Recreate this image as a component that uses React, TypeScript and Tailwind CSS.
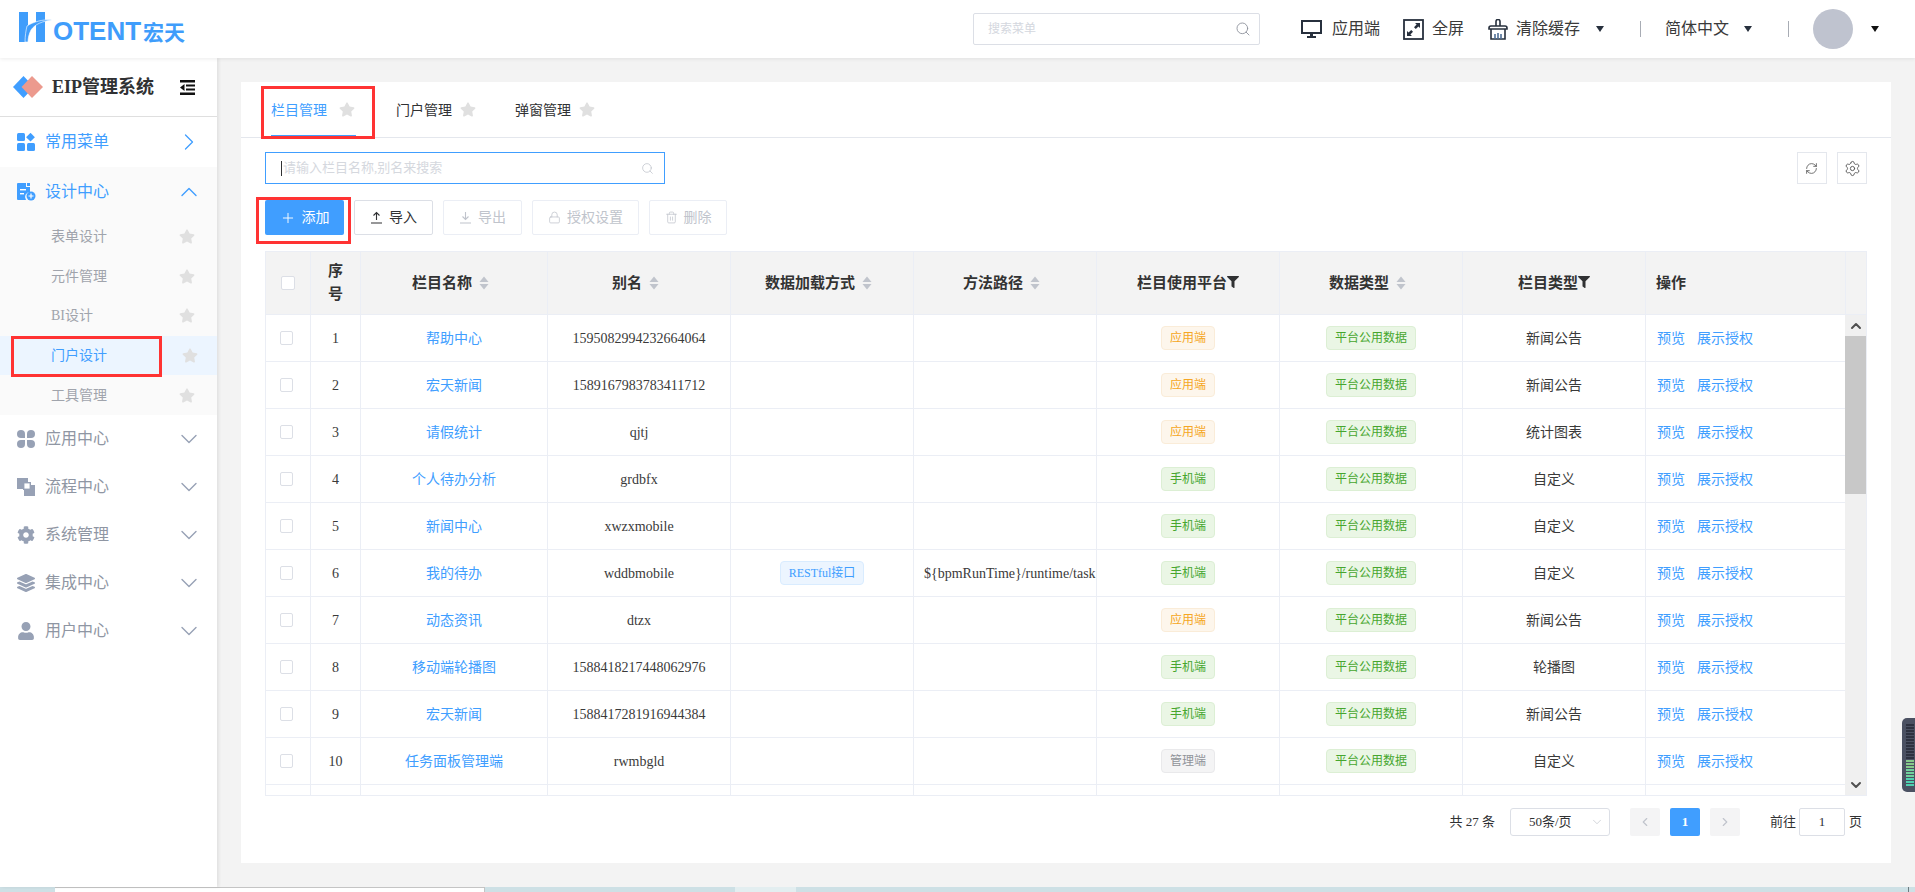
import React from 'react';
import { Lock, Trash2, Settings, RefreshCw, Search, ChevronLeft, ChevronRight, ChevronDown, ChevronUp, Plus } from 'lucide-react';
import { FaStar, FaFilter, FaCog, FaLayerGroup, FaUser } from 'react-icons/fa';

type Row = { id: number; name: string; alias: string; load?: string; path?: string; platform: string; kind: string };

const rows: Row[] = [
  { id: 1, name: '帮助中心', alias: '1595082994232664064', platform: '应用端', kind: '新闻公告' },
  { id: 2, name: '宏天新闻', alias: '1589167983783411712', platform: '应用端', kind: '新闻公告' },
  { id: 3, name: '请假统计', alias: 'qjtj', platform: '应用端', kind: '统计图表' },
  { id: 4, name: '个人待办分析', alias: 'grdbfx', platform: '手机端', kind: '自定义' },
  { id: 5, name: '新闻中心', alias: 'xwzxmobile', platform: '手机端', kind: '自定义' },
  { id: 6, name: '我的待办', alias: 'wddbmobile', load: 'RESTful接口', path: '${bpmRunTime}/runtime/task', platform: '手机端', kind: '自定义' },
  { id: 7, name: '动态资讯', alias: 'dtzx', platform: '应用端', kind: '新闻公告' },
  { id: 8, name: '移动端轮播图', alias: '1588418217448062976', platform: '手机端', kind: '轮播图' },
  { id: 9, name: '宏天新闻', alias: '1588417281916944384', platform: '手机端', kind: '新闻公告' },
  { id: 10, name: '任务面板管理端', alias: 'rwmbgld', platform: '管理端', kind: '自定义' },
];

const cell = 'flex items-center justify-center border-r border-b border-[#ebeef5] min-w-0';
const bodyGrid = 'grid grid-cols-[45px_50px_187px_183px_183px_183px_183px_183px_183px_200px] h-[47px] text-[14px] text-[#3a3a3a]';

function Sort() {
  return (
    <svg width="10" height="14" viewBox="0 0 10 14" className="ml-[7px] mr-[7px] shrink-0">
      <path d="M5 0.5 L9.5 6 H0.5 Z" fill="#c0c4cc" />
      <path d="M5 13.5 L9.5 8 H0.5 Z" fill="#c0c4cc" />
    </svg>
  );
}

function Filter() {
  return <FaFilter className="text-[#303133] w-[12px] h-[12px] -mt-[2px] shrink-0" />;
}

function Tag({ text }: { text: string }) {
  const tone =
    text === '应用端'
      ? 'bg-[#fdf6ec] border-[#faecd8] text-[#f5a623]'
      : text === '管理端'
        ? 'bg-[#f4f4f5] border-[#e9e9eb] text-[#909399]'
        : text === 'RESTful接口'
          ? 'bg-[#ecf5ff] border-[#d9ecff] text-[#409eff]'
          : 'bg-[#eaf6e5] border-[#dcefd4] text-[#46a62e]';
  return <span className={`inline-flex items-center h-[24px] px-[8px] border rounded-[4px] text-[12px] ${tone}`}>{text}</span>;
}

function Star({ className = '' }: { className?: string }) {
  return <FaStar className={`w-[16px] h-[15px] text-[#e0e0e0] shrink-0 ${className}`} />;
}

function Dashboard() {
  return (
    <svg width="18" height="18" viewBox="0 0 18 18" fill="#409eff" className="shrink-0">
      <rect x="0" y="0" width="8" height="8" rx="1.5" />
      <path d="M13.5 -0.2 L17.9 4.2 L13.5 8.6 L9.1 4.2 Z" />
      <rect x="0" y="10" width="8" height="8" rx="1.5" />
      <rect x="10" y="10" width="8" height="8" rx="1.5" />
    </svg>
  );
}

function DesignFile() {
  return (
    <svg width="19" height="18" viewBox="0 0 19 18" className="shrink-0">
      <path d="M1 0 H9 V4 H13 V9 A5 5 0 0 0 9 17 H1 A1 1 0 0 1 0 16 V1 A1 1 0 0 1 1 0 Z" fill="#409eff" />
      <rect x="10" y="0" width="3" height="3" fill="#409eff" />
      <rect x="3" y="6" width="6" height="1.4" fill="#fff" />
      <rect x="3" y="10" width="4" height="1.4" fill="#fff" />
      <circle cx="14" cy="13" r="4.5" fill="#409eff" />
      <path d="M14 10.5 V15.5 M11.5 13 H16.5" stroke="#fff" strokeWidth="1.2" />
    </svg>
  );
}

function Clover() {
  return (
    <svg width="18" height="18" viewBox="0 0 18 18" fill="#97a1b5" className="shrink-0">
      <path d="M8 8 H4 A4 4 0 1 1 8 4 Z" />
      <path d="M10 8 H14 A4 4 0 1 0 10 4 Z" />
      <path d="M8 10 H4 A4 4 0 1 0 8 14 Z" />
      <path d="M10 10 H14 A4 4 0 1 1 10 14 Z" />
    </svg>
  );
}

function Flow() {
  return (
    <svg width="18" height="18" viewBox="0 0 18 18" className="shrink-0">
      <path d="M0 0 H11 V6 H6 V11 H0 Z" fill="#97a1b5" />
      <rect x="6.7" y="4.7" width="6.6" height="6.6" fill="#fff" stroke="#97a1b5" strokeWidth="1.4" />
      <path d="M7 7 H18 V18 H7 V12 H13 V7 Z" fill="#97a1b5" />
    </svg>
  );
}

function Broom() {
  return (
    <svg width="20" height="21" viewBox="0 0 20 21" fill="none" stroke="#27303d" strokeWidth="1.6" className="shrink-0">
      <path d="M8 7 V2.5 A2 2 0 0 1 12 2.5 V7" />
      <path d="M1 9 A2 2 0 0 1 3 7 H17 A2 2 0 0 1 19 9 V10 H1 Z" />
      <path d="M3 10 V20 H17 V10" />
      <path d="M7 15 V20 M10 14 V20 M13 15 V20" stroke="#4f6f96" />
    </svg>
  );
}

function MenuRow({ icon, label, active, open, tall }: { icon: React.ReactNode; label: string; active?: boolean; open?: boolean; tall?: boolean }) {
  return (
    <div className={`flex items-center pl-[17px] pr-[14px] ${tall ? 'h-[50px]' : 'h-[48px]'} ${active ? 'text-[#409eff]' : 'text-[#8f96a3]'}`}>
      <span className="w-[28px] flex">{icon}</span>
      <span className="text-[16px] flex-1">{label}</span>
      {open === undefined ? (
        <ChevronRight className="w-[28px] h-[28px]" strokeWidth={1.1} />
      ) : open ? (
        <ChevronUp className="w-[28px] h-[28px]" strokeWidth={1.2} />
      ) : (
        <ChevronDown className="w-[28px] h-[28px] text-[#97a1b5]" strokeWidth={1.2} />
      )}
    </div>
  );
}

function SubItem({ label, active }: { label: string; active?: boolean }) {
  return (
    <div className={`relative flex items-center h-[39.6px] pl-[51px] pr-[22px] text-[14px] ${active ? 'bg-[#ecf5ff] text-[#409eff]' : 'text-[#a0a4ac]'}`}>
      <span className="flex-1">{label}</span>
      <Star className={active ? 'translate-x-[3px]' : ''} />
      {active && <span className="absolute left-[11px] top-0 w-[151px] h-[41px] border-[3px] border-[#ff3333]" />}
    </div>
  );
}

function Tab({ label, active }: { label: string; active?: boolean }) {
  return (
    <div className={`relative flex items-center h-full pt-[2px] text-[14px] ${active ? 'gap-[12px] mr-[2px] text-[#409eff]' : 'gap-[8px] text-[#303133]'}`}>
      <span>{label}</span>
      <Star className="-mt-[2px]" />
      {active && (
        <>
          <span className="absolute left-0 -right-[1px] bottom-0 h-[2px] bg-[#409eff]" />
          <span className="absolute -left-[10px] top-[4px] w-[114px] h-[53px] border-[3px] border-[#ff3333]" />
        </>
      )}
    </div>
  );
}

function ToolBtn({ icon, label, disabled, width }: { icon: React.ReactNode; label: string; disabled?: boolean; width: string }) {
  return (
    <button className={`flex items-center justify-center gap-[6px] h-[35px] border rounded-[2px] bg-white text-[14px] ${width} ${disabled ? 'border-[#ebeef5] text-[#c0c4cc]' : 'border-[#dcdfe6] text-[#303133]'}`}>
      {icon}
      {label}
    </button>
  );
}

function Head({ children, sort, filter }: { children: React.ReactNode; sort?: boolean; filter?: boolean }) {
  return (
    <div className="flex items-center justify-center border-r border-[#ebeef5] text-[15px] font-bold text-[#333333]">
      <span>{children}</span>
      {sort && <Sort />}
      {filter && <Filter />}
    </div>
  );
}

const meter = [0, 1, 2, 3, 4, 5, 6, 7, 8, 9, 10, 11, 12, 13, 14, 15, 16, 17, 18, 19, 20];

export default function App() {
  return (
    <div className="relative flex flex-col w-full h-[892px] overflow-hidden bg-[#f3f3f3] font-['Liberation_Serif','Noto_Sans_CJK_SC',serif]">
      {/* top bar */}
      <header className="relative z-20 flex items-center h-[58px] shrink-0 bg-white shadow-[0_1px_4px_rgba(0,0,0,0.08)]">
        <div className="flex items-end w-[973px] pl-[19px] pb-[3px] text-[#3f9dfb]">
          <svg width="33" height="31" viewBox="0 0 33 31" fill="#3f9dfb" className="shrink-0">
            <path d="M0 0 H9 V13 C7 19 6.5 25 6.5 30 H0 Z" />
            <path d="M17 0 H26 V30 H17 Z" />
            <path d="M8 14 C14 10 24 7 33 8 C24 9 16 12 12 18 C10 22 9 26 9 30 H6 C6 24 7 18 8 14 Z" stroke="#fff" strokeWidth="0.6" />
          </svg>
          <span className="ml-[1px] text-[26px] leading-[24px] font-bold font-['Liberation_Sans',sans-serif]">OTENT</span>
          <span className="ml-[2px] text-[21px] leading-[24px] font-bold font-['Noto_Sans_CJK_SC',sans-serif]">宏天</span>
        </div>
        <div className="flex items-center justify-between w-[287px] h-[32px] border border-[#dcdfe6] rounded-[2px] pl-[14px] pr-[8px]">
          <span className="text-[12px] text-[#d4d7de]">搜索菜单</span>
          <Search className="w-[16px] h-[16px] text-[#8a8f99]" strokeWidth={1.3} />
        </div>
        <div className="flex items-center h-full text-[16px] text-[#3a3a3a]">
          <svg width="21" height="18" viewBox="0 0 21 18" className="ml-[41px] shrink-0">
            <path d="M1 1 H20 V13 H1 Z" fill="none" stroke="#27303d" strokeWidth="2" />
            <path d="M9 14 H12 V16 H15 V18 H6 V16 H9 Z" fill="#27303d" />
          </svg>
          <span className="ml-[10px]">应用端</span>
          <svg width="21" height="21" viewBox="0 0 21 21" className="ml-[23px] shrink-0">
            <rect x="1" y="1" width="19" height="19" fill="none" stroke="#27303d" strokeWidth="1.8" />
            <path d="M12 4 H17 V9 L15.4 7.4 L12.8 10 L11 8.2 L13.6 5.6 Z" fill="#27303d" />
            <path d="M9 17 H4 V12 L5.6 13.6 L8.2 11 L10 12.8 L7.4 15.4 Z" fill="#27303d" />
          </svg>
          <span className="ml-[8px]">全屏</span>
          <span className="ml-[24px]"><Broom /></span>
          <span className="ml-[8px]">清除缓存</span>
          <span className="ml-[16px] w-0 h-0 border-x-[4.5px] border-x-transparent border-t-[6px] border-t-[#27303d]" />
          <span className="ml-[36px] w-px h-[16px] bg-[#a8acb4]" />
          <span className="ml-[24px]">简体中文</span>
          <span className="ml-[15px] w-0 h-0 border-x-[4.5px] border-x-transparent border-t-[6px] border-t-[#27303d]" />
          <span className="ml-[36px] w-px h-[16px] bg-[#a8acb4]" />
          <span className="ml-[24px] w-[40px] h-[40px] rounded-full bg-[#bfc3cf]" />
          <span className="ml-[18px] w-0 h-0 border-x-[4.5px] border-x-transparent border-t-[6px] border-t-[#111]" />
        </div>
      </header>

      <div className="flex h-[829px] shrink-0">
        {/* side menu */}
        <aside className="relative z-10 flex flex-col w-[217px] shrink-0 bg-white shadow-[2px_0_3px_rgba(0,0,0,0.07)]">
          <div className="flex items-center h-[59px] shrink-0 border-b border-[#dfdfdf] pl-[13px] pr-[22px]">
            <svg width="30" height="22" viewBox="0 0 30 22" className="shrink-0">
              <path d="M10.5 0 L21 11 L10.5 22 L0 11 Z" fill="#409eff" />
              <path d="M19 0 L30 11 L19 22 L8.5 11 Z" fill="#ec9a8e" />
            </svg>
            <span className="ml-[9px] flex-1 text-[18px] font-bold text-[#303133] whitespace-nowrap">EIP管理系统</span>
            <svg width="15" height="15" viewBox="0 0 15 15" className="shrink-0">
              <path d="M0 0 H15 V2.6 H0 Z M0 12.4 H15 V15 H0 Z M6 4.6 H15 V6.6 H6 Z M6 8.4 H15 V10.4 H6 Z M0 7.5 L4.5 4 V11 Z" fill="#111" />
            </svg>
          </div>
          <MenuRow icon={<Dashboard />} label="常用菜单" active tall />
          <div className="bg-[#fafafa]">
            <MenuRow icon={<DesignFile />} label="设计中心" active open tall />
            <SubItem label="表单设计" />
            <SubItem label="元件管理" />
            <SubItem label="BI设计" />
            <SubItem label="门户设计" active />
            <SubItem label="工具管理" />
          </div>
          <MenuRow icon={<Clover />} label="应用中心" open={false} />
          <MenuRow icon={<Flow />} label="流程中心" open={false} />
          <MenuRow icon={<FaCog className="w-[18px] h-[18px] text-[#97a1b5]" />} label="系统管理" open={false} />
          <MenuRow icon={<FaLayerGroup className="w-[18px] h-[18px] text-[#97a1b5]" />} label="集成中心" open={false} />
          <MenuRow icon={<FaUser className="w-[18px] h-[18px] text-[#97a1b5]" />} label="用户中心" open={false} />
        </aside>

        {/* content */}
        <main className="flex-1 min-w-0 pt-[24px] pl-[24px] pr-[24px] pb-[24px]">
          <section className="h-full bg-white flex flex-col">
            <div className="flex items-center h-[56px] shrink-0 border-b border-[#e4e7ed] pl-[30px] gap-[39px]">
              <Tab label="栏目管理" active />
              <Tab label="门户管理" />
              <Tab label="弹窗管理" />
            </div>

            <div className="flex flex-col pl-[24px] pr-[24px] pt-[14px]">
              <div className="flex items-center justify-between h-[32px]">
                <div className="flex items-center justify-between w-[400px] h-[32px] border border-[#409eff] pl-[15px] pr-[10px]">
                  <span className="flex items-center text-[13px] text-[#d5d8de]">
                    <span className="w-px h-[15px] bg-[#303133] mr-[1px]" />
                    请输入栏目名称,别名来搜索
                  </span>
                  <Search className="w-[13px] h-[13px] text-[#c0c4cc]" strokeWidth={1.4} />
                </div>
                <div className="flex gap-[10px]">
                  <button className="flex items-center justify-center w-[30px] h-[32px] border border-[#e4e7ed]">
                    <RefreshCw className="w-[13px] h-[13px] text-[#555] -translate-x-[1px]" strokeWidth={1.5} />
                  </button>
                  <button className="flex items-center justify-center w-[30px] h-[32px] border border-[#e4e7ed]">
                    <Settings className="w-[17px] h-[17px] text-[#555]" strokeWidth={1.3} />
                  </button>
                </div>
              </div>

              <div className="flex items-center h-[35px] mt-[16px] gap-[10px]">
                <div className="relative">
                  <button className="flex items-center justify-center gap-[6px] w-[79px] h-[35px] rounded-[2px] bg-[#409eff] text-white text-[14px]">
                    <Plus className="w-[16px] h-[16px]" strokeWidth={1.4} />
                    添加
                  </button>
                  <span className="absolute -left-[9px] -top-[3px] w-[95px] h-[47px] border-[3px] border-[#ff3333]" />
                </div>
                <ToolBtn
                  width="w-[79px]"
                  label="导入"
                  icon={<svg width="13" height="13" viewBox="0 0 13 13" fill="none" stroke="#303133" strokeWidth="1.1"><path d="M6.5 9 V1.5 M3.5 4.5 L6.5 1.5 L9.5 4.5 M1 12 H12" /></svg>}
                />
                <ToolBtn
                  width="w-[79px]"
                  disabled
                  label="导出"
                  icon={<svg width="13" height="13" viewBox="0 0 13 13" fill="none" stroke="#c0c4cc" strokeWidth="1.1"><path d="M6.5 1 V8.5 M3.5 5.5 L6.5 8.5 L9.5 5.5 M1 12 H12" /></svg>}
                />
                <ToolBtn width="w-[107px]" disabled label="授权设置" icon={<Lock className="w-[13px] h-[13px]" strokeWidth={1.4} />} />
                <ToolBtn width="w-[78px]" disabled label="删除" icon={<Trash2 className="w-[13px] h-[13px]" strokeWidth={1.4} />} />
              </div>

              {/* table */}
              <div className="mt-[16px] border-t border-l border-[#ebeef5] border-r">
                <div className="grid grid-cols-[45px_50px_187px_183px_183px_183px_183px_183px_183px_200px_1fr] h-[63px] bg-[#f3f3f3] border-b border-[#ebeef5]">
                  <div className="flex items-center justify-center border-r border-[#ebeef5]">
                    <span className="block w-[14px] h-[14px] border border-[#dcdfe6] rounded-[2px] bg-white" />
                  </div>
                  <div className="flex items-center justify-center border-r border-[#ebeef5] text-[15px] font-bold text-[#333333] text-center leading-[23px]">
                    序<br />号
                  </div>
                  <Head sort>栏目名称</Head>
                  <Head sort>别名</Head>
                  <Head sort>数据加载方式</Head>
                  <Head sort>方法路径</Head>
                  <Head filter>栏目使用平台</Head>
                  <Head sort>数据类型</Head>
                  <Head filter>栏目类型</Head>
                  <div className="flex items-center border-r border-[#ebeef5] pl-[10px] text-[15px] font-bold text-[#333333]">操作</div>
                  <div />
                </div>
                <div className="flex h-[481px] border-b border-[#ebeef5]">
                  <div className="w-[1579px] shrink-0 overflow-hidden">
                    {rows.map((r) => (
                      <div key={r.id} className={bodyGrid}>
                        <div className={cell}>
                          <span className="block w-[13px] h-[14px] mr-[3px] border border-[#dcdfe6] rounded-[2px] bg-white" />
                        </div>
                        <div className={cell}>{r.id}</div>
                        <div className={`${cell} text-[#409eff]`}>{r.name}</div>
                        <div className={cell}>{r.alias}</div>
                        <div className={cell}>{r.load && <Tag text={r.load} />}</div>
                        <div className={`${cell} justify-start! pl-[10px] overflow-hidden whitespace-nowrap`}>{r.path}</div>
                        <div className={cell}><Tag text={r.platform} /></div>
                        <div className={cell}><Tag text="平台公用数据" /></div>
                        <div className={cell}>{r.kind}</div>
                        <div className={`${cell} justify-start! pl-[11px] gap-[12px] text-[#409eff]`}>
                          <span>预览</span>
                          <span>展示授权</span>
                        </div>
                      </div>
                    ))}
                    <div className={bodyGrid}>
                      {meter.slice(0, 10).map((i) => (
                        <div key={i} className="border-r border-[#ebeef5]" />
                      ))}
                    </div>
                  </div>
                  <div className="flex flex-col flex-1 bg-[#f0f0f0] items-center">
                    <div className="flex items-center justify-center h-[21px] shrink-0">
                      <ChevronUp className="w-[16px] h-[16px] text-[#505050]" strokeWidth={3} />
                    </div>
                    <div className="w-full h-[158px] shrink-0 bg-[#c8c8c8]" />
                    <div className="flex-1" />
                    <div className="flex items-center justify-center h-[21px] shrink-0">
                      <ChevronDown className="w-[16px] h-[16px] text-[#505050]" strokeWidth={3} />
                    </div>
                  </div>
                </div>
              </div>

              {/* pagination */}
              <div className="flex items-center justify-end h-[28px] mt-[12px] mr-[5px] text-[13px] text-[#303133]">
                <span>共 27 条</span>
                <div className="flex items-center justify-between w-[100px] h-[28px] ml-[15px] border border-[#dcdfe6] rounded-[3px] pl-[18px] pr-[5px]">
                  <span>50条/页</span>
                  <ChevronDown className="w-[14px] h-[14px] text-[#c0c4cc]" strokeWidth={1.2} />
                </div>
                <span className="flex items-center justify-center w-[30px] h-[28px] ml-[20px] rounded-[2px] bg-[#f4f4f5]">
                  <ChevronLeft className="w-[14px] h-[14px] text-[#c0c4cc]" />
                </span>
                <span className="flex items-center justify-center w-[30px] h-[28px] ml-[10px] rounded-[2px] bg-[#409eff] text-white font-bold">1</span>
                <span className="flex items-center justify-center w-[30px] h-[28px] ml-[10px] rounded-[2px] bg-[#f4f4f5]">
                  <ChevronRight className="w-[14px] h-[14px] text-[#c0c4cc]" />
                </span>
                <span className="ml-[30px]">前往</span>
                <span className="flex items-center justify-center w-[46px] h-[28px] ml-[3px] border border-[#dcdfe6] rounded-[2px]">1</span>
                <span className="ml-[4px]">页</span>
              </div>
            </div>
          </section>
        </main>
      </div>

      {/* strip of the window behind */}
      <div className="flex h-[5px] shrink-0 bg-[#cde0e5]">
        <div className="w-[55px]" />
        <div className="w-[430px] bg-white border-t border-r border-[#c4c4c4]" />
        <div className="w-[250px]" />
        <div className="w-[61px] bg-[#e3eef0]" />
        <div className="w-[1113px] border-r border-[#6d7a80]" />
      </div>

      {/* floating meter at the window edge */}
      <div className="absolute right-0 top-[718px] z-30 flex flex-col items-center justify-center gap-[1px] w-[13px] h-[74px] rounded-l-[5px] bg-[#4b5162]">
        {meter.map((i) => (
          <span key={i} className={`block w-[8px] h-[2px] ml-[3px] ${i < 12 ? 'bg-[#2e3240]' : i < 15 ? 'bg-[#86c98a]' : i < 18 ? 'bg-[#6fd09c]' : 'bg-[#4fd0b0]'}`} />
        ))}
      </div>
    </div>
  );
}
